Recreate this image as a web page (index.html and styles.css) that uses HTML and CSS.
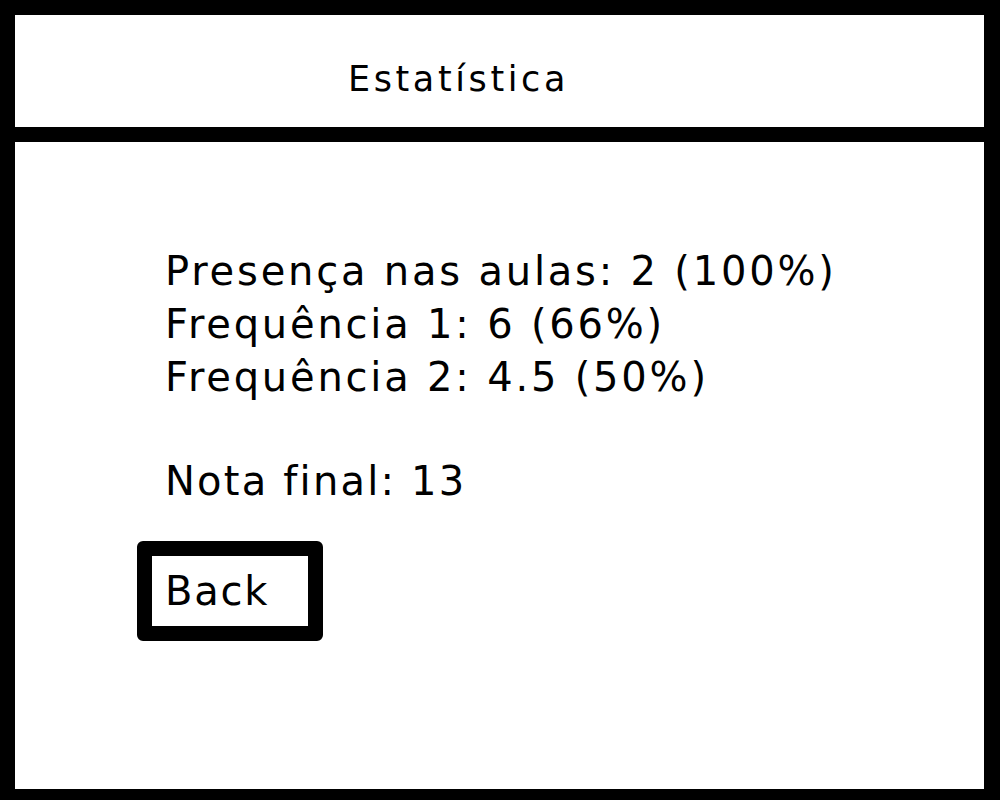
FILE: index.html
```html
<!DOCTYPE html>
<html lang="pt-PT">

<head>
	<meta charset="utf-8">
	<title>Estatística</title>
	<link rel="stylesheet" href="styles.css">
</head>

<body>
	<div class="frame">
		<div class="header">Estatística</div>
		<div class="content">
			<p class="stats">Presença nas aulas: 2 (100%)<br>
			Frequência 1: 6 (66%)<br>
			Frequência 2: 4.5 (50%)</p>
			<p class="final">Nota final: 13</p>
			<button class="back">Back</button>
		</div>
	</div>
</body>

</html>
```

FILE: styles.css
```css
body {
	margin: 0;
	background-color: white;
	color: black;
	font-family: "DejaVu Sans", Verdana, sans-serif;
}
.frame {
	box-sizing: border-box;
	width: 1000px;
	height: 800px;
	border-style: solid;
	border-color: black;
	border-width: 15px 16px 11px 15px;
	overflow: hidden;
}
.header {
	box-sizing: border-box;
	height: 127px;
	border-bottom: 15px solid black;
	padding: 44px 0 0 333px;
	font-size: 35px;
	line-height: 41px;
	letter-spacing: 3.6px;
}
.content {
	padding: 103px 0 0 150px;
	font-size: 40px;
	line-height: 53px;
}
.stats, .final {
	margin: 0;
}
.stats {
	letter-spacing: 2.8px;
}
.final {
	margin-top: 51px;
	letter-spacing: 2.2px;
}
.back {
	display: block;
	box-sizing: border-box;
	width: 186px;
	height: 100px;
	margin: 33px 0 0 -28px;
	padding: 0 0 0 13px;
	border: 15px solid black;
	border-radius: 6px;
	background-color: white;
	color: black;
	font-family: inherit;
	font-size: 40px;
	line-height: 53px;
	letter-spacing: 1.75px;
	text-align: left;
}
```
